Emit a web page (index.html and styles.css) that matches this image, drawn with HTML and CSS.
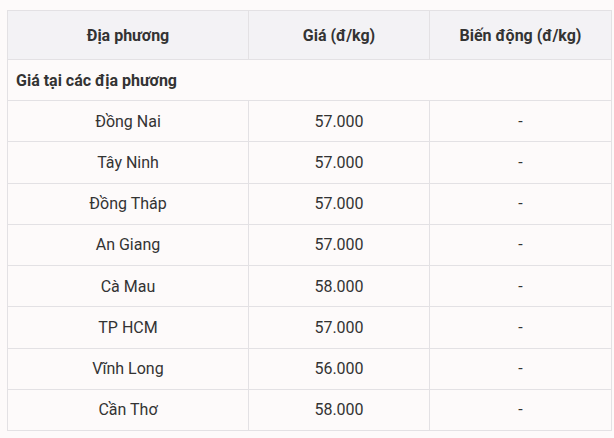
FILE: index.html
```html
<!DOCTYPE html>
<html lang="vi">
<head>
<meta charset="utf-8">
<link rel="stylesheet" href="styles.css">
</head>
<body>
<div class="wrap">
<table class="price-table">
  <thead>
    <tr><th class="c1">Địa phương</th><th class="c2">Giá (đ/kg)</th><th class="c3">Biến động (đ/kg)</th></tr>
  </thead>
  <tbody>
    <tr class="group"><td colspan="3">Giá tại các địa phương</td></tr>
    <tr><td>Đồng Nai</td><td>57.000</td><td>-</td></tr>
    <tr><td>Tây Ninh</td><td>57.000</td><td>-</td></tr>
    <tr><td>Đồng Tháp</td><td>57.000</td><td>-</td></tr>
    <tr><td>An Giang</td><td>57.000</td><td>-</td></tr>
    <tr><td>Cà Mau</td><td>58.000</td><td>-</td></tr>
    <tr><td>TP HCM</td><td>57.000</td><td>-</td></tr>
    <tr><td>Vĩnh Long</td><td>56.000</td><td>-</td></tr>
    <tr><td>Cần Thơ</td><td>58.000</td><td>-</td></tr>
  </tbody>
</table>
</div>
</body>
</html>
```
FILE: styles.css
```css
html, body {
  margin: 0;
  background: #fdfafa;
}
.wrap {
  padding: 10px 6px 0 7px;
}
.price-table {
  width: 601px;
  border-collapse: collapse;
  table-layout: fixed;
  font-family: Roboto, "Liberation Sans", sans-serif;
  font-size: 16px;
  color: #333;
}
.price-table th, .price-table td {
  border: 1px solid #e3e1e4;
  text-align: center;
  padding: 0 8px;
}
.price-table th {
  background: #f3f2f5;
  font-weight: 700;
  height: 48px;
}
.price-table td {
  height: 40.25px;
}
.c1 { width: 224px; }
.c2 { width: 164px; }
.c3 { width: 165px; }
.price-table .group td {
  text-align: left;
  font-weight: 700;
  height: 40px;
}
```
